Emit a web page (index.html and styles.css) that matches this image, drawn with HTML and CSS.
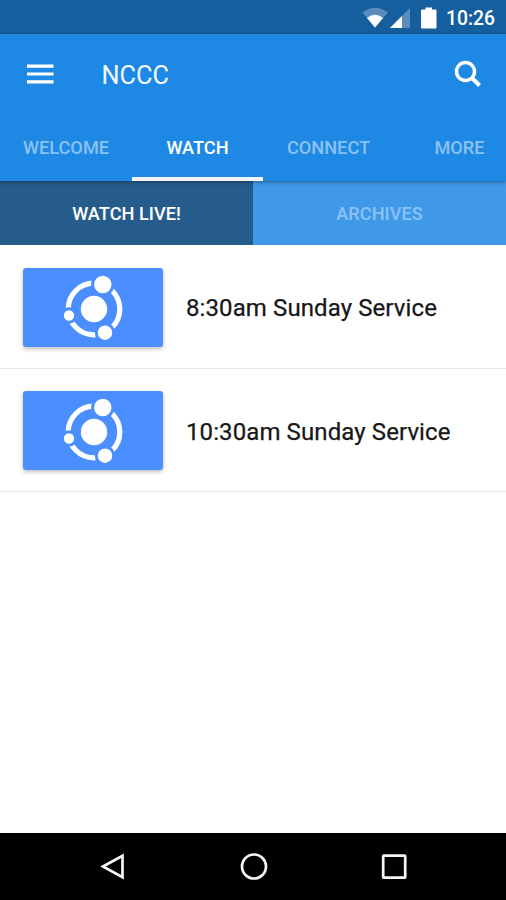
FILE: index.html
```
<!DOCTYPE html>
<html lang="en">
<head>
<meta charset="utf-8">
<title>NCCC</title>
<link rel="stylesheet" href="styles.css">
</head>
<body>
<div class="screen">
  <div class="status">
    <svg class="status-icons" width="76" height="34" viewBox="0 0 76 34">
      <path d="M0.5 12.5Q13 3 26 12.5L13 27.5Z" fill="#5a8dbd"/>
      <path d="M5 18Q13 11.500 21 18L13 27.500Z" fill="#fff"/>
      <path d="M28 28L48 8V28Z" fill="#5a8dbd"/>
      <path d="M28 28L40 16V28Z" fill="#fff"/>
      <path d="M60 9.500h3.500V7.500h6.500v2h3.500q1 0 1 1v17q0 1-1 1H60q-1 0-1-1v-17q0-1 1-1Z" fill="#fff"/>
    </svg>
    <span class="clock">10:26</span>
  </div>
  <header class="header">
    <div class="toolbar">
      <svg class="menu" width="27" height="20" viewBox="0 0 27 20"><path d="M0 2.200H26.500M0 10H26.500M0 17.800H26.500" stroke="#fff" stroke-width="3.200"/></svg>
      <h1 class="title">NCCC</h1>
      <svg class="search" width="28" height="28" viewBox="0 0 28 28" fill="none" stroke="#fff"><circle cx="11.500" cy="11.500" r="9" stroke-width="3.500"/><path d="M18 18L25.500 25.500" stroke-width="4"/></svg>
    </div>
    <nav class="tabs">
      <a class="tab welcome">WELCOME</a>
      <a class="tab watch active">WATCH</a>
      <a class="tab connect">CONNECT</a>
      <a class="tab more">MORE</a>
    </nav>
  </header>
  <div class="subtabs">
    <div class="subtab selected">WATCH LIVE!</div>
    <div class="subtab">ARCHIVES</div>
  </div>
  <main class="list">
    <div class="row">
      <div class="thumb">
        <svg width="140" height="79" viewBox="0 0 140 79">
          <circle cx="71" cy="41" r="25.800" fill="none" stroke="#fff" stroke-width="5.200"/>
          <g fill="#fff" stroke="#4b8eff" stroke-width="3"><circle cx="79.800" cy="16.500" r="10.200"/><circle cx="46" cy="47.500" r="6.700"/><circle cx="82" cy="64.700" r="8.700"/></g>
          <circle cx="71" cy="41" r="13.200" fill="#fff"/>
        </svg>
      </div>
      <span class="name">8:30am Sunday Service</span>
    </div>
    <div class="row second">
      <div class="thumb">
        <svg width="140" height="79" viewBox="0 0 140 79">
          <circle cx="71" cy="41" r="25.800" fill="none" stroke="#fff" stroke-width="5.200"/>
          <g fill="#fff" stroke="#4b8eff" stroke-width="3"><circle cx="79.800" cy="16.500" r="10.200"/><circle cx="46" cy="47.500" r="6.700"/><circle cx="82" cy="64.700" r="8.700"/></g>
          <circle cx="71" cy="41" r="13.200" fill="#fff"/>
        </svg>
      </div>
      <span class="name">10:30am Sunday Service</span>
    </div>
  </main>
  <footer class="navbar">
    <svg width="28" height="30" viewBox="0 0 28 30"><path d="M4 14.500L23.500 3.800V25.200Z"/></svg>
    <svg width="28" height="30" viewBox="0 0 28 30"><circle cx="14" cy="14.500" r="12"/></svg>
    <svg width="28" height="30" viewBox="0 0 28 30"><rect x="3.200" y="3.700" width="22" height="22" rx=".5"/></svg>
  </footer>
</div>
</body>
</html>
```

FILE: styles.css
```
* { box-sizing: border-box; }
body { margin: 0; font-family: Roboto, "Liberation Sans", sans-serif; }
svg { display: block; flex: none; }
.screen { width: 506px; height: 900px; display: flex; flex-direction: column; background: #fff; overflow: hidden; }
.status { height: 34px; background: #155f9f; display: flex; align-items: center; justify-content: flex-end; padding-right: 11px; flex: none; }
.status-icons { margin-right: 8px; }
.clock { color: #fff; font-size: 19.3px; font-weight: 500; line-height: 34px; padding-top: 3px; }
.header { height: 147px; background: #1e88e5; flex: none; position: relative; box-shadow: 0 1px 4px rgba(0, 0, 0, .4); }
.toolbar { height: 80px; display: flex; align-items: center; padding: 0 24px 0 26.5px; }
.title { margin: 0 auto 0 48px; font-size: 25.3px; font-weight: 400; line-height: 30px; color: #f2f9ff; padding-top: 3px; }
.tabs { height: 67px; display: flex; }
.tab { font-size: 18.2px; font-weight: 500; line-height: 67px; color: #8ac2f3; text-align: center; white-space: nowrap; flex: none; }
.welcome { width: 132px; }
.watch { width: 131px; }
.connect { width: 131px; }
.more { width: 131px; }
.active { color: #fff; border-bottom: 4px solid #f2f6f9; }
.subtabs { height: 64px; display: flex; flex: none; }
.subtab { flex: 1; background: #4098e9; color: #8bc3f6; text-align: center; font-size: 18.2px; font-weight: 500; line-height: 65px; }
.selected { background: #265c8b; color: #fff; }
.list { flex: 1; }
.row { height: 124px; display: flex; align-items: center; padding: 1px 23px 0; border-bottom: 1px solid #e6e6e6; }
.second { height: 123px; }
.thumb { width: 140px; height: 79px; background: #4b8eff; border-radius: 3px; box-shadow: 0 2px 4px rgba(0, 0, 0, .25); }
.name { margin-left: 23px; padding-top: 2px; font-size: 24px; font-weight: 400; letter-spacing: .1px; color: #171717; -webkit-text-stroke: .25px #171717; white-space: nowrap; }
.navbar { height: 67px; flex: none; background: #000; display: flex; align-items: center; justify-content: space-between; padding: 0 98px 0 99px; }
.navbar svg { fill: none; stroke: #f5f5f5; stroke-width: 2.700; }
```
